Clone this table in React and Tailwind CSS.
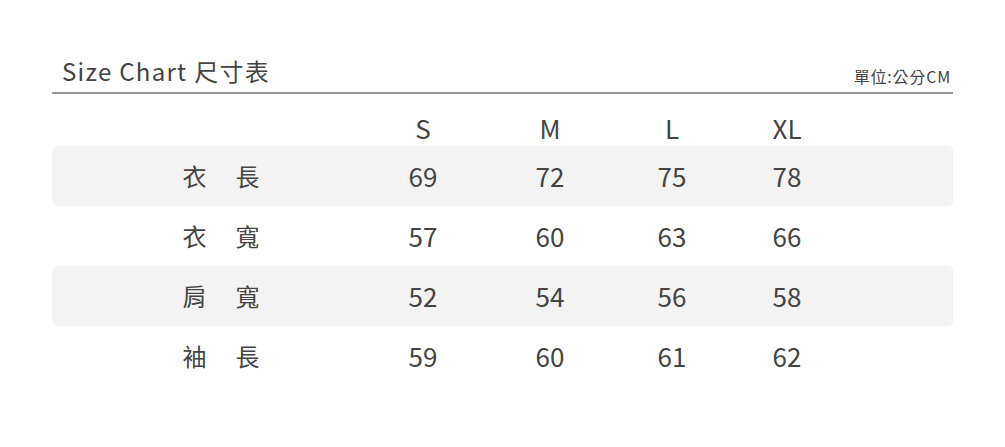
const sizes = ['S', 'M', 'L', 'XL'];

const rows = [
  { label: ['衣', '長'], values: ['69', '72', '75', '78'] },
  { label: ['衣', '寬'], values: ['57', '60', '63', '66'] },
  { label: ['肩', '寬'], values: ['52', '54', '56', '58'] },
  { label: ['袖', '長'], values: ['59', '60', '61', '62'] },
];

const cols = 'grid grid-cols-[338px_66px_188px_56px_174px_1fr] items-center';

const App = () => {
  return (
    <div
      className="w-full h-[447px] bg-white text-[#444]"
      style={{ fontFamily: '"Noto Sans CJK TC", "Noto Sans", sans-serif' }}
    >
      <div className="mx-[52px] pt-[56px]">
        {/* Header */}
        <div className="flex justify-between items-end border-b-2 border-[#999] pl-[10px] pr-[2px] pb-[6px]">
          <h1 className="text-[24px] leading-[30px] tracking-[1.3px]">Size Chart 尺寸表</h1>
          <span className="text-[16px] leading-[20px] tracking-[0.8px]">單位:公分CM</span>
        </div>

        {/* Size labels */}
        <div className={`${cols} h-[52px] pt-[16px] text-[26px] leading-none`}>
          <div></div>
          {sizes.map((s) => (
            <div key={s} className="text-center">{s}</div>
          ))}
          <div></div>
        </div>

        {/* Rows */}
        {rows.map((row, i) => (
          <div
            key={i}
            className={`${cols} h-[60px] rounded-[5px] text-[26px] leading-none ${i % 2 === 0 ? 'bg-[#f3f3f3]' : ''}`}
          >
            <div className="flex justify-center gap-[29px] text-[24px]">
              <span>{row.label[0]}</span>
              <span>{row.label[1]}</span>
            </div>
            {row.values.map((v, j) => (
              <div key={j} className="text-center">{v}</div>
            ))}
            <div></div>
          </div>
        ))}
      </div>
    </div>
  );
};

export default App;
